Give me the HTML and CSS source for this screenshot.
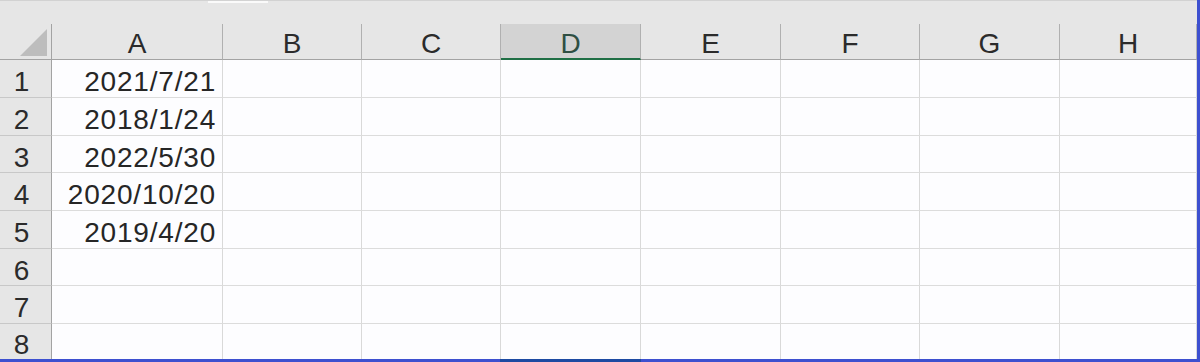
FILE: index.html
```html
<!DOCTYPE html>
<html lang="en">
<head>
    <meta charset="UTF-8">
    <title>Sheet1</title>
    <link rel="stylesheet" href="styles.css">
</head>
<body>
    <div class="window">
        <!-- edge of the ribbon above the grid -->
        <div class="ribbon-edge"><span class="tab"></span></div>

        <div class="sheet">
            <!-- column headers -->
            <div class="corner"><span class="tri"></span></div>
            <div class="col-head">A</div>
            <div class="col-head">B</div>
            <div class="col-head">C</div>
            <div class="col-head active">D</div>
            <div class="col-head">E</div>
            <div class="col-head">F</div>
            <div class="col-head">G</div>
            <div class="col-head">H</div>

            <!-- rows -->
            <div class="row-head">1</div><div class="cell num">2021/7/21</div>
            <div class="cell"></div><div class="cell"></div><div class="cell"></div><div class="cell"></div><div class="cell"></div><div class="cell"></div><div class="cell"></div>

            <div class="row-head">2</div><div class="cell num">2018/1/24</div>
            <div class="cell"></div><div class="cell"></div><div class="cell"></div><div class="cell"></div><div class="cell"></div><div class="cell"></div><div class="cell"></div>

            <div class="row-head">3</div><div class="cell num">2022/5/30</div>
            <div class="cell"></div><div class="cell"></div><div class="cell"></div><div class="cell"></div><div class="cell"></div><div class="cell"></div><div class="cell"></div>

            <div class="row-head">4</div><div class="cell num">2020/10/20</div>
            <div class="cell"></div><div class="cell"></div><div class="cell"></div><div class="cell"></div><div class="cell"></div><div class="cell"></div><div class="cell"></div>

            <div class="row-head">5</div><div class="cell num">2019/4/20</div>
            <div class="cell"></div><div class="cell"></div><div class="cell"></div><div class="cell"></div><div class="cell"></div><div class="cell"></div><div class="cell"></div>

            <div class="row-head">6</div><div class="cell"></div>
            <div class="cell"></div><div class="cell"></div><div class="cell"></div><div class="cell"></div><div class="cell"></div><div class="cell"></div><div class="cell"></div>

            <div class="row-head">7</div><div class="cell"></div>
            <div class="cell"></div><div class="cell"></div><div class="cell"></div><div class="cell"></div><div class="cell"></div><div class="cell"></div><div class="cell"></div>

            <div class="row-head last">8</div><div class="cell last"></div>
            <div class="cell last"></div><div class="cell last"></div><div class="cell last"></div><div class="cell last"></div><div class="cell last"></div><div class="cell last"></div><div class="cell last"></div>
        </div>

        <!-- window frame at the bottom, darker under the selected column -->
        <div class="bottom-edge"><span class="sel"></span></div>
    </div>
</body>
</html>
```

FILE: styles.css
```css
* {
    margin: 0;
    padding: 0;
    box-sizing: border-box;
}

html, body {
    width: 1200px;
    height: 362px;
    overflow: hidden;
    background: #e6e6e6;
    font-family: "Liberation Sans", Arial, sans-serif;
}

.window {
    width: 1200px;
    height: 362px;
    border-right: 3px solid #3d50d0;
    display: flex;
    flex-direction: column;
}

.ribbon-edge {
    height: 24px;
    background: #e6e6e6;
    border-top: 1px solid #d2d2d2;
}

.tab {
    display: block;
    width: 60px;
    height: 2px;
    margin-left: 208px;
    background: #fafafa;
}

.sheet {
    display: grid;
    grid-template-columns: 52px 171px 139px 139px 140px 140px 139px 140px 137px;
    grid-template-rows: 36px 38px 38px 37px 38px 38px 37px 38px 35px;
    background: #fdfdff;
}

/* header cells */
.corner {
    display: flex;
    justify-content: flex-end;
    align-items: flex-end;
    padding: 0 4px 3px 0;
    background: #e6e6e6;
    border-right: 1px solid #a3a3a3;
    border-bottom: 1px solid #a3a3a3;
}

.tri {
    width: 0;
    height: 0;
    border-left: 27px solid transparent;
    border-bottom: 27px solid #bdbdbd;
}

.col-head {
    display: flex;
    justify-content: center;
    align-items: center;
    padding-top: 4px;
    font-size: 28px;
    color: #2b2b2b;
    background: #e6e6e6;
    border-right: 1px solid #b0b0b0;
    border-bottom: 1px solid #a3a3a3;
}

.col-head.active {
    background: #d3d3d3;
    color: #2f4f43;
    border-bottom: 2px solid #1f6f45;
    padding-top: 5px;
}

.row-head {
    display: flex;
    justify-content: center;
    align-items: center;
    padding: 7px 8px 0 0;
    font-size: 28px;
    color: #2b2b2b;
    background: #e6e6e6;
    border-right: 1px solid #a3a3a3;
    border-bottom: 1px solid #c8c8c8;
}

/* grid cells */
.cell {
    border-right: 1px solid #d9d9d9;
    border-bottom: 1px solid #dcdcdc;
}

.num {
    display: flex;
    justify-content: flex-end;
    align-items: center;
    padding: 7px 6px 0 0;
    font-size: 28px;
    letter-spacing: 0.8px;
    color: #262626;
}

.last {
    border-bottom: none;
}

.bottom-edge {
    height: 3px;
    background: #3d50d0;
}

.sel {
    display: block;
    width: 141px;
    height: 3px;
    margin-left: 500px;
    background: #1d4aa2;
}
```
